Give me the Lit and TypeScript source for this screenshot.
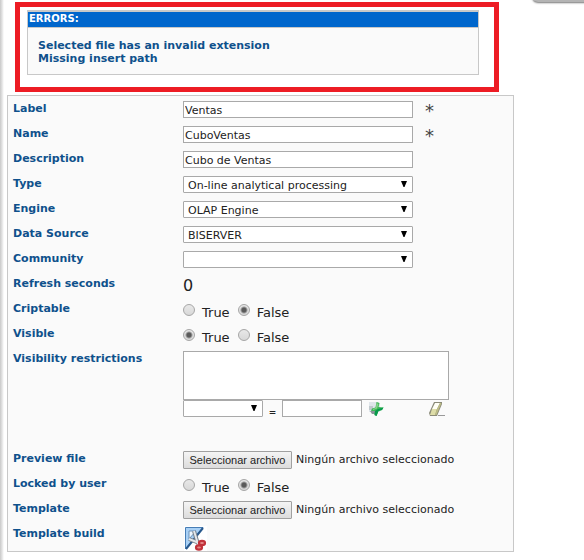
import { LitElement, html, css, nothing } from "lit";
import { customElement } from "lit/decorators.js";

@customElement("app-root")
export class AppRoot extends LitElement {
  static styles = css`
    * {
      box-sizing: border-box;
    }
    :host {
      display: block;
      position: relative;
      overflow: hidden;
      min-height: 100vh;
      padding: 2px 0 8px 7px;
      background: linear-gradient(to right, #c8c8c8 0, #e2e2e2 2px, #fff 4px) no-repeat #fff;
      font: 11px/13px "DejaVu Sans", Verdana, sans-serif;
      color: #222;
    }
    .corner {
      position: absolute;
      top: -20px;
      right: -20px;
      width: 72px;
      height: 22px;
      border-radius: 6px;
      background: #b4b4b4;
      box-shadow: 0 1px 2px #777;
    }
    .highlight {
      margin: 0 85px 3px 8px;
      border: 5px solid #ed1c24;
      padding: 3px 15px 12px 7px;
    }
    .errors {
      border: 1px solid #c8c8c8;
      border-top-width: 2px;
      background: #fafafa;
      font-weight: bold;
    }
    .errors-title {
      margin: 0;
      height: 16px;
      border-bottom: 1px solid #c8c8c8;
      padding-left: 1px;
      background: #06c;
      color: #fff;
      font-size: 10px;
      line-height: 13px;
    }
    .errors-list {
      list-style: none;
      margin: 0;
      padding: 11px 10px 9px;
      color: #0f518c;
    }
    .panel {
      margin-right: 70px;
      border: 1px solid #c8c8c8;
      padding-left: 5px;
      background: #fafafa;
    }
    .row {
      display: grid;
      grid-template-columns: 170px minmax(0, 1fr);
      align-items: start;
      min-height: 25px;
    }
    .row.tall {
      min-height: 100px;
    }
    .row.last {
      min-height: 30px;
    }
    .name {
      line-height: 25px;
      font-weight: bold;
      color: #0f518c;
    }
    .control {
      display: flex;
      align-items: flex-start;
      padding-top: 5px;
    }
    .column {
      display: block;
    }
    input,
    select,
    textarea,
    button {
      margin: 0;
      font: inherit;
      color: #222;
    }
    .text,
    select,
    textarea {
      display: block;
      border: 1px solid #a9a9a9;
      border-radius: 0;
      background: #fff;
      outline: none;
    }
    .text,
    select {
      width: 100%;
      height: 17px;
      padding: 1px 1px 0;
    }
    select {
      appearance: none;
      border-radius: 1px;
      padding-left: 4px;
    }
    .field {
      position: relative;
      width: 230px;
    }
    .short {
      width: 80px;
    }
    .arrow {
      position: absolute;
      top: 5px;
      right: 6px;
      pointer-events: none;
    }
    .star {
      height: 17px;
      padding-left: 12px;
      color: #444;
      font-size: 18px;
      line-height: 19px;
    }
    .value {
      font-size: 16px;
      line-height: 20px;
    }
    .radios {
      display: flex;
      align-items: flex-start;
      padding-top: 8px;
    }
    .choice {
      display: flex;
      gap: 7px;
      margin-right: 8px;
      font-size: 13px;
      line-height: 17px;
    }
    .radio {
      appearance: none;
      width: 12px;
      height: 12px;
      border: 1px solid #a6a6a6;
      border-radius: 50%;
      background: linear-gradient(#e8e8e8, #d8d8d8);
    }
    .radio:checked {
      background: radial-gradient(circle, #5a5a5a 2px, transparent 4px), linear-gradient(#e8e8e8, #d8d8d8);
    }
    textarea {
      width: 266px;
      height: 49px;
      resize: none;
    }
    .rule {
      display: flex;
      align-items: flex-start;
    }
    .equals {
      width: 19px;
      padding-top: 6px;
      text-align: center;
      font-size: 9px;
      font-weight: bold;
      line-height: 12px;
    }
    .icon {
      display: block;
      border: 0;
      padding: 0;
      background: none;
    }
    .icon svg {
      display: block;
    }
    .add {
      margin-left: 7px;
    }
    .erase {
      margin-left: 44px;
    }
    .browse {
      width: 109px;
      height: 18px;
      border: 1px solid #a0a0a0;
      border-radius: 1px;
      padding: 0;
      background: linear-gradient(#f4f4f4, #dcdcdc);
      font: 11px/16px "Liberation Sans", Arial, sans-serif;
      white-space: nowrap;
    }
    .chosen {
      padding-left: 4px;
      line-height: 18px;
      white-space: nowrap;
    }
    .build {
      margin-left: 1px;
      background: #fff;
    }
  `;

  private label(id: string, text: string) {
    return html`<label class="name" for=${id}>${text}</label>`;
  }

  private arrow() {
    return html`<svg class="arrow" width="6" height="6" viewBox="0 0 6 6" aria-hidden="true">
      <path d="M0 0H6L3.5 6H2.5Z" fill="#000" />
    </svg>`;
  }

  private textRow(id: string, label: string, value: string, required: boolean) {
    return html`<div class="row">
      ${this.label(id, label)}
      <div class="control">
        <div class="field"><input class="text" id=${id} type="text" .value=${value} ?required=${required} /></div>
        ${required ? html`<span class="star">*</span>` : nothing}
      </div>
    </div>`;
  }

  private selectRow(id: string, label: string, value: string) {
    return html`<div class="row">
      ${this.label(id, label)}
      <div class="control">
        <div class="field">
          <select id=${id}><option>${value}</option></select>${this.arrow()}
        </div>
      </div>
    </div>`;
  }

  private radioRow(id: string, label: string, value: boolean) {
    return html`<div class="row" role="radiogroup" aria-labelledby=${id}>
      <span class="name" id=${id}>${label}</span>
      <div class="radios">
        <label class="choice"><input class="radio" type="radio" name=${id} ?checked=${value} />True</label>
        <label class="choice"><input class="radio" type="radio" name=${id} ?checked=${!value} />False</label>
      </div>
    </div>`;
  }

  private browse(e: Event) {
    const button = e.currentTarget as HTMLElement;
    button.parentElement?.querySelector<HTMLInputElement>("input[type=file]")?.click();
  }

  private fileRow(id: string, label: string) {
    return html`<div class="row">
      ${this.label(id, label)}
      <div class="control">
        <button class="browse" id=${id} type="button" @click=${this.browse}>Seleccionar archivo</button>
        <span class="chosen">Ningún archivo seleccionado</span>
        <input type="file" hidden aria-label=${label} />
      </div>
    </div>`;
  }

  render() {
    return html`
      <div class="corner"></div>
      <div class="highlight">
        <section class="errors" role="alert">
          <h2 class="errors-title">ERRORS:</h2>
          <ul class="errors-list">
            <li>Selected file has an invalid extension</li>
            <li>Missing insert path</li>
          </ul>
        </section>
      </div>
      <form class="panel">
        ${this.textRow("label", "Label", "Ventas", true)}
        ${this.textRow("name", "Name", "CuboVentas", true)}
        ${this.textRow("description", "Description", "Cubo de Ventas", false)}
        ${this.selectRow("type", "Type", "On-line analytical processing")}
        ${this.selectRow("engine", "Engine", "OLAP Engine")}
        ${this.selectRow("source", "Data Source", "BISERVER")}
        ${this.selectRow("community", "Community", "")}
        <div class="row">
          <span class="name">Refresh seconds</span>
          <div class="control"><span class="value">0</span></div>
        </div>
        ${this.radioRow("criptable", "Criptable", false)}
        ${this.radioRow("visible", "Visible", true)}
        <div class="row tall">
          ${this.label("restrictions", "Visibility restrictions")}
          <div class="control column">
            <textarea id="restrictions"></textarea>
            <div class="rule">
              <div class="field short"><select aria-label="Attribute"></select>${this.arrow()}</div>
              <span class="equals">=</span>
              <div class="field short"><input class="text" type="text" aria-label="Value" /></div>
              <button class="icon add" type="button" aria-label="Add">
                <svg width="16" height="17" viewBox="0 0 16 17">
                  <path d="M0 2H9L11 4V12H0Z" fill="#dfe5ea" />
                  <path d="M0 6H4V10H0Z" fill="#c0c8cd" />
                  <path d="M1 11H7V14H3Z" fill="#8b9299" />
                  <path d="M7.5 2L10.5 3L9.5 7L14.5 7.5L13 10L9.5 11L7.5 16L5.5 15L6 11L2 11L3 8.5L6.5 7.5Z" fill="#3fb658" />
                  <path d="M9 9L14.5 7.5L13 10L9.5 11L7.5 16L5.5 15L6 11Z" fill="#079a4b" />
                  <path d="M7.5 3L9.5 4L8 8.5L4 10L4 9L7 8Z" fill="#8bd48c" />
                </svg>
              </button>
              <button class="icon erase" type="button" aria-label="Clear">
                <svg width="17" height="17" viewBox="0 0 17 17">
                  <path d="M5 2H13L13 4L8 16H1L0 13Z" fill="#8a8a78" />
                  <path d="M6 3H11L8 9H3Z" fill="#fffff5" />
                  <path d="M3 9H8L6 15H1Z" fill="#deddA8" />
                  <path d="M11 3H12.5L7.5 15H6L8 9Z" fill="#bdbd85" />
                  <path d="M9 15.5H16" stroke="#999" />
                </svg>
              </button>
            </div>
          </div>
        </div>
        ${this.fileRow("preview", "Preview file")}
        ${this.radioRow("locked", "Locked by user", false)}
        ${this.fileRow("template", "Template")}
        <div class="row last">
          ${this.label("build", "Template build")}
          <div class="control">
            <button class="icon build" id="build" type="button">
              <svg width="23" height="25" viewBox="0 0 23 25">
                <path d="M1.5 1.5H19L1.5 23Z" fill="#a8d0f5" stroke="#477db5" />
                <path d="M2 23L19 2" stroke="#28588c" stroke-width="2" />
                <path d="M5 5H12L5 13Z" fill="#eef7ff" stroke="#6a91b8" />
                <path d="M5 13L15 17M10 5L14 18" fill="none" stroke="#77818b" stroke-width="4" />
                <path d="M5 13L15 17M10 5L14 18" fill="none" stroke="#e4e8ec" stroke-width="2" />
                <ellipse cx="18" cy="17" rx="3" ry="2.2" fill="#e58a8a" stroke="#c1323a" stroke-width="2.2" />
                <ellipse cx="15" cy="21.5" rx="3" ry="2.2" fill="#e58a8a" stroke="#c1323a" stroke-width="2.2" />
              </svg>
            </button>
          </div>
        </div>
      </form>
    `;
  }
}
